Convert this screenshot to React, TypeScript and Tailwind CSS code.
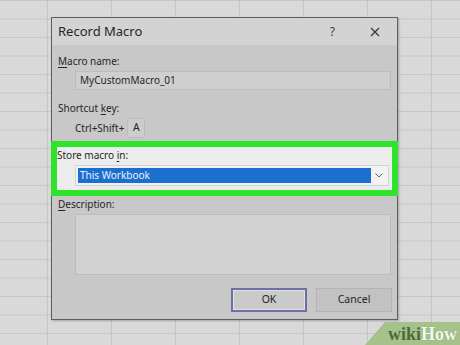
import React from "react";

const font = { fontFamily: '"Noto Sans", "Open Sans", sans-serif' };

function U({ children }: { children: React.ReactNode }) {
  return <span className="underline underline-offset-2 decoration-1">{children}</span>;
}

export default function App() {
  return (
    <div
      className="relative w-[460px] h-[345px] overflow-hidden bg-[#d9d9d9] bg-[linear-gradient(to_right,#c5c5c5_1px,transparent_1px),linear-gradient(to_bottom,#c7c7c7_1px,transparent_1px)] bg-[size:64px_18.5px] bg-[position:47px_0px]"
      style={font}
    >
      {/* dialog */}
      <div className="absolute left-[51px] top-[17px] w-[347px] h-[303px] bg-[#c8c8c8] border border-[#5e5e5e] shadow-[1px_1px_2px_rgba(0,0,0,0.25)] flex flex-col text-[#262626]">
        <div className="h-[27px] bg-[#d3d3d3] flex items-center pl-[6px] pr-[14px]">
          <span className="text-[13px] leading-none">Record Macro</span>
          <span className="ml-auto text-[12px] text-[#444] mr-[35px]">?</span>
          <svg width="10" height="10" viewBox="0 0 10 10" className="mr-[3px]">
            <path d="M1 1 L9 9 M9 1 L1 9" stroke="#333" strokeWidth="1.1" fill="none" />
          </svg>
        </div>

        <div className="flex flex-col text-[10px]">
          <div className="px-[6px] mt-[8px] leading-[16px]">
            <U>M</U>acro name:
          </div>
          <div className="ml-[23px] mr-[6px] mt-[2px] h-[19px] bg-[#cfcfcf] border border-[#bcbcbc] flex items-center pl-[4px]">
            MyCustomMacro_01
          </div>

          <div className="px-[6px] mt-[10px] leading-[16px]">
            Shortcut <U>k</U>ey:
          </div>
          <div className="ml-[23px] mt-[2px] flex items-center gap-[3px]">
            <span>Ctrl+Shift+</span>
            <div className="w-[18px] h-[20px] bg-[#cdcdcd] border border-[#bdbdbd] flex items-start justify-center text-[10.5px] leading-[16px]">
              A
            </div>
          </div>

          <div className="mt-[3px] h-[55px] -mx-px border-[6px] border-[#2fe32a] bg-[#ececec] flex flex-col">
            <div className="mt-[1px] leading-[15px]">
              Store macro <U>i</U>n:
            </div>
            <div className="ml-[18px] mr-[3px] mt-[2px] h-[21px] bg-[#f2f2f2] border border-[#d2d2d2] flex items-center p-[2px]">
              <div className="flex-1 h-full bg-[#1b70cf] text-[#e9f0fa] leading-[15px] pl-[2px]">
                This Workbook
              </div>
              <div className="w-[15px] flex items-center justify-center">
                <svg width="8" height="5" viewBox="0 0 8 5">
                  <path d="M0.5 0.5 L4 4 L7.5 0.5" stroke="#666" strokeWidth="1" fill="none" />
                </svg>
              </div>
            </div>
          </div>

          <div className="px-[6px] leading-[16px]">
            <U>D</U>escription:
          </div>
          <div className="ml-[23px] mr-[6px] mt-[2px] h-[61px] bg-[#d2d2d2] border border-[#bcbcbc]" />

          <div className="mt-[13px] flex justify-end gap-[9px] pr-[5px] text-[10.5px]">
            <div className="w-[76px] h-[24px] border-2 border-[#6d70a3] bg-[#cacaca] flex items-center justify-center">
              <div className="w-full h-full border border-[#e0e0e0] flex items-center justify-center">OK</div>
            </div>
            <div className="w-[76px] h-[24px] border border-[#b4b4b4] bg-[#c2c2c2] flex items-center justify-center">
              Cancel
            </div>
          </div>
        </div>
      </div>

      {/* wikiHow watermark */}
      <div className="absolute right-0 bottom-0 w-[95px] h-[23px] bg-[#9ebf82]/90 [clip-path:polygon(20px_0,100%_0,100%_100%,0_100%)] flex items-center justify-end pr-[3px]">
        <span
          className="text-[18px] font-bold leading-none"
          style={{ fontFamily: '"Liberation Serif", "DejaVu Serif", serif' }}
        >
          <span className="text-[#4e6a3b]">wiki</span>
          <span className="text-[#f4f8ef] [text-shadow:0_0_1px_#6f8f55]">How</span>
        </span>
      </div>
    </div>
  );
}
